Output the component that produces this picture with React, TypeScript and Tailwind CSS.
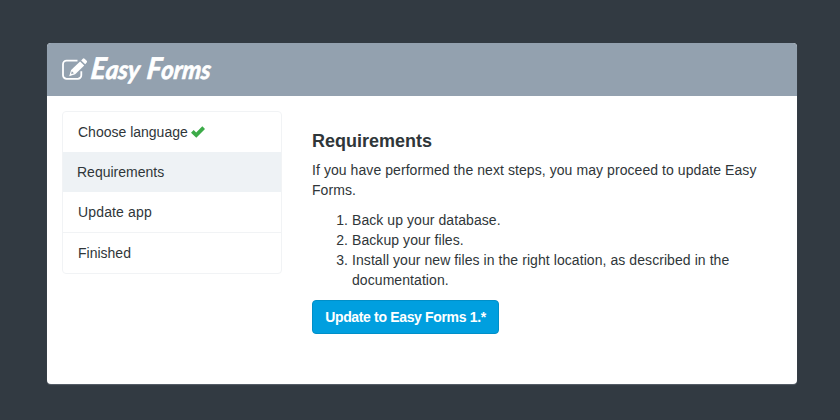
import React from "react";

function EditIcon() {
  return (
    <svg width="26" height="24" viewBox="0 0 26 24" fill="none" className="shrink-0">
      <path
        d="M15.5 3.7H4.6A3.6 3.6 0 0 0 1 7.3v10.9a3.6 3.6 0 0 0 3.6 3.6h11.1a3.6 3.6 0 0 0 3.6-3.6v-3.9"
        stroke="#fff"
        strokeWidth="1.8"
      />
      <path d="M18.1 4.4 22.2 8.4 13.2 17.2 7.2 19.2 9.1 13.1Z" fill="#fff" />
      <path d="M19.2 3.4 20.8 1.7q.9-.9 1.8 0l2.1 2.1q.9.9 0 1.8l-1.5 1.7Z" fill="#fff" />
      <path d="m9.9 14.3 2 2-2.2.8-.6-.6Z" fill="#93a1af" />
    </svg>
  );
}

function CheckIcon() {
  return (
    <svg width="14" height="12" viewBox="0 0 14 12" className="ml-[3px] inline-block align-[-1px]">
      <path d="M0 6.8 2.7 4.1 5.2 6.4 11.3.3 14 3 5.3 11.7Z" fill="#3cab48" />
    </svg>
  );
}

const steps = ["Choose language", "Requirements", "Update app", "Finished"];

export default function App() {
  return (
    <div className="h-[420px] w-[840px] overflow-hidden bg-[#323a42] pt-[43px] pl-[47px] font-['Liberation_Sans',Arial,sans-serif] text-[14px] leading-5 text-[#2f3639]">
      <main className="h-[341px] w-[750px] overflow-hidden rounded-[4px] bg-white shadow-[0_1px_1px_#58616b]">
        <header className="flex h-[53px] bg-[#93a1af] pt-[14px] pl-[15px] text-white">
          <EditIcon />
          <svg
            width="130"
            height="38"
            className="-mt-[6px] ml-[1px] overflow-visible"
            fill="#fff"
            stroke="#fff"
            strokeWidth="0.7"
            strokeLinejoin="round"
          >
            <g transform="translate(1 28) skewX(-7)" className="font-['Lato',sans-serif] font-bold italic">
              <text textLength="49" lengthAdjust="spacingAndGlyphs">
                <tspan className="text-[30px]">E</tspan>
                <tspan className="text-[26px]">asy</tspan>
              </text>
              <text x="56" textLength="64" lengthAdjust="spacingAndGlyphs">
                <tspan className="text-[30px]">F</tspan>
                <tspan className="text-[26px]">orms</tspan>
              </text>
            </g>
          </svg>
        </header>
        <div className="flex items-start">
          <nav className="mt-[15px] ml-[15px] h-[163px] w-[220px] shrink-0 overflow-hidden rounded-[4px] border border-[#f1f3f5]">
            {steps.map((step, i) => (
              <div
                key={step}
                className={
                  i === 1
                    ? "-mx-px h-10 bg-[#eef2f5] pt-[10px] pl-[15px]"
                    : i === 2
                      ? "h-[41px] border-b border-[#f1f3f5] pt-[10px] pl-[15px] tracking-[0.15px]"
                      : "h-10 pt-[10px] pl-[15px]"
                }
              >
                {step}
                {i === 0 && <CheckIcon />}
              </div>
            ))}
          </nav>
          <section className="mt-[35px] ml-[30px] w-[460px] tracking-[0.07px]">
            <h1 className="text-[18px] leading-5 font-bold tracking-normal">Requirements</h1>
            <p className="mt-[9px] whitespace-nowrap">
              If you have performed the next steps, you may proceed to update Easy
              <br />
              Forms.
            </p>
            <ol className="mt-[10px] list-decimal pl-10 whitespace-nowrap">
              <li>Back up your database.</li>
              <li>Backup your files.</li>
              <li>
                Install your new files in the right location, as described in the
                <br />
                documentation.
              </li>
            </ol>
            <button className="mt-[10px] h-[34px] w-[187px] rounded-[4px] border border-[#008fc8] bg-[#009fdf] text-[14px] font-bold tracking-[-0.34px] whitespace-nowrap text-white">
              Update to Easy Forms 1.*
            </button>
          </section>
        </div>
      </main>
    </div>
  );
}
